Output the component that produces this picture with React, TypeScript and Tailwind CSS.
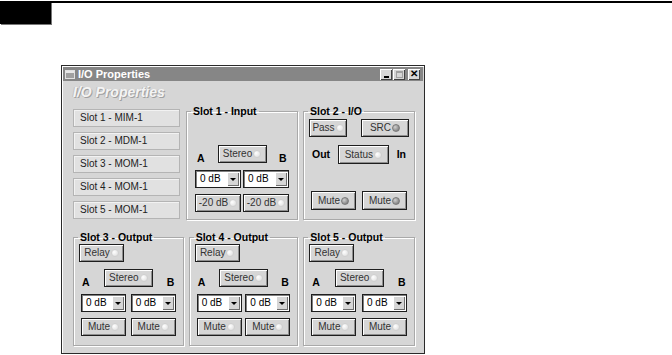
import React from 'react';

type Led = 'off' | 'dark';

const font = { fontFamily: '"Liberation Sans", Arial, sans-serif' };

function Light({ led }: { led: Led }) {
  return (
    <span
      className={
        led === 'dark'
          ? 'inline-block h-[8px] w-[8px] rounded-full border border-[#7a7a7a] bg-[radial-gradient(circle_at_35%_35%,#d0d0d0,#6a6a6a)]'
          : 'inline-block h-[8px] w-[8px] rounded-full border border-[#d0d0d0] bg-[radial-gradient(circle_at_35%_35%,#ffffff,#dadada)]'
      }
    />
  );
}

function Btn({ label, w, led = 'off', h = 'h-[18px]' }: { label: string; w: string; led?: Led; h?: string }) {
  return (
    <div
      className={`flex ${h} ${w} items-center justify-center gap-[1px] border border-[#1e1e1e] bg-[#d6d6d6] text-[10px] leading-none text-[#333] shadow-[inset_1px_1px_0_#ffffff,inset_-1px_-1px_0_#8e8e8e]`}
    >
      <span>{label}</span>
      <Light led={led} />
    </div>
  );
}

function Drop({ w }: { w: string }) {
  return (
    <div className={`flex h-[18px] ${w} items-center border border-[#1e1e1e] bg-white p-[1px] shadow-[inset_1px_1px_0_#808080]`}>
      <span className="flex-1 pl-[3px] text-[10px] leading-none text-black">0 dB</span>
      <div className="flex h-full w-[12px] items-center justify-center bg-[#d6d6d6] shadow-[inset_1px_1px_0_#ffffff,inset_-1px_-1px_0_#6e6e6e]">
        <span className="h-0 w-0 border-x-[3px] border-t-[3px] border-x-transparent border-t-black" />
      </div>
    </div>
  );
}

function Group({ title, w, h, children }: { title: string; w: string; h: string; children: React.ReactNode }) {
  return (
    <fieldset
      className={`${w} ${h} border border-[#a9a9a9] shadow-[inset_1px_1px_0_#ffffff,1px_1px_0_#ffffff]`}
    >
      <legend className="ml-[4px] px-[2px] text-[10.5px] font-bold leading-[12px] text-black">{title}</legend>
      {children}
    </fieldset>
  );
}

function OutputGroup({ n, w }: { n: number; w: string }) {
  return (
    <Group title={`Slot ${n} - Output`} w={w} h="h-[115px]">
      <div className="flex px-[5px] pt-[1px]">
        <Btn label="Relay" w="w-[45px]" />
      </div>
      <div className="mt-[7px] flex items-end justify-between px-[8px]">
        <span className="w-[8px] text-[10.5px] font-bold leading-[10px]">A</span>
        <Btn label="Stereo" w="w-[49px]" />
        <span className="w-[8px] text-[10.5px] font-bold leading-[10px]">B</span>
      </div>
      <div className="mt-[7px] flex justify-between px-[7px]">
        <Drop w="w-[45px]" />
        <Drop w="w-[45px]" />
      </div>
      <div className="mt-[6px] flex justify-between px-[7px]">
        <Btn label="Mute" w="w-[45px]" />
        <Btn label="Mute" w="w-[45px]" />
      </div>
    </Group>
  );
}

export default function App() {
  const slots = ['Slot 1 - MIM-1', 'Slot 2 - MDM-1', 'Slot 3 - MOM-1', 'Slot 4 - MOM-1', 'Slot 5 - MOM-1'];

  return (
    <div className="min-h-[355px] w-[672px] bg-white" style={font}>
      {/* page header strip */}
      <div className="flex h-[24px] pt-[1px]">
        <div className="h-[23px] w-[51px] bg-black shadow-[1px_1px_0_#777]" />
        <div className="h-[2px] flex-1 bg-black" />
      </div>

      {/* dialog window */}
      <div className="ml-[61px] mt-[41px] flex h-[289px] w-[364px] flex-col border border-[#2a2a2a] bg-[#d6d6d6] p-[1px] shadow-[inset_1px_1px_0_#ffffff]">
        {/* title bar */}
        <div className="flex h-[14px] items-center bg-[#868686] pl-[2px] pr-[3px]">
          <div className="flex h-[9px] w-[10px] flex-col border border-[#e0e0e0] bg-[#a0a0a0]">
            <div className="h-[2px] bg-[#e8e8e8]" />
          </div>
          <span className="ml-[3px] text-[11px] font-bold leading-none text-white">I/O Properties</span>
          <div className="ml-auto flex gap-[1px]">
            <div className="flex h-[11px] w-[12px] items-end justify-center bg-[#d6d6d6] pb-[2px] shadow-[inset_1px_1px_0_#ffffff,inset_-1px_-1px_0_#404040]">
              <div className="h-[2px] w-[5px] bg-black" />
            </div>
            <div className="flex h-[11px] w-[12px] items-center justify-center bg-[#d6d6d6] shadow-[inset_1px_1px_0_#ffffff,inset_-1px_-1px_0_#404040]">
              <div className="h-[7px] w-[7px] border border-[#a0a0a0] border-t-2" />
            </div>
            <div className="ml-[2px] flex h-[11px] w-[12px] items-center justify-center bg-[#d6d6d6] text-[10px] font-bold leading-none text-black shadow-[inset_1px_1px_0_#ffffff,inset_-1px_-1px_0_#404040]">
              ✕
            </div>
          </div>
        </div>

        {/* body */}
        <div className="flex flex-1 flex-col pl-[10px] pr-[8px]">
          <div className="mt-[4px] text-[14px] font-bold italic leading-[14px] text-[#f4f4f4] [text-shadow:1px_1px_0_#a0a0a0,-1px_0_0_#c0c0c0]">
            I/O Properties
          </div>

          <div className="mt-[6px] flex">
            <div className="flex w-[107px] flex-col gap-[5px] pt-[4px]">
              {slots.map((s) => (
                <div
                  key={s}
                  className="flex h-[18px] items-center border border-[#b4b4b4] bg-[#e1e1e1] pl-[6px] text-[10px] leading-none text-[#222] shadow-[inset_1px_1px_0_#f2f2f2]"
                >
                  {s}
                </div>
              ))}
            </div>

            <div className="ml-[6px]">
              <Group title="Slot 1 - Input" w="w-[112px]" h="h-[115px]">
                <div className="mt-[28px] flex items-end justify-between px-[10px]">
                  <span className="w-[8px] text-[10.5px] font-bold leading-[10px]">A</span>
                  <Btn label="Stereo" w="w-[49px]" />
                  <span className="w-[8px] text-[10.5px] font-bold leading-[10px]">B</span>
                </div>
                <div className="mt-[7px] flex justify-between px-[8px]">
                  <Drop w="w-[46px]" />
                  <Drop w="w-[46px]" />
                </div>
                <div className="mt-[6px] flex justify-between px-[8px]">
                  <Btn label="-20 dB" w="w-[46px]" />
                  <Btn label="-20 dB" w="w-[46px]" />
                </div>
              </Group>
            </div>

            <div className="ml-[5px]">
              <Group title="Slot 2 - I/O" w="w-[112px]" h="h-[115px]">
                <div className="mt-[2px] flex justify-between px-[5px]">
                  <Btn label="Pass" w="w-[38px]" />
                  <Btn label="SRC" w="w-[48px]" led="dark" />
                </div>
                <div className="mt-[8px] flex items-center justify-between px-[8px]">
                  <span className="text-[10.5px] font-bold leading-none">Out</span>
                  <Btn label="Status" w="w-[51px]" h="h-[19px]" />
                  <span className="text-[10.5px] font-bold leading-none">In</span>
                </div>
                <div className="mt-[27px] flex justify-between px-[7px]">
                  <Btn label="Mute" w="w-[45px]" h="h-[19px]" led="dark" />
                  <Btn label="Mute" w="w-[45px]" h="h-[19px]" led="dark" />
                </div>
              </Group>
            </div>
          </div>

          <div className="mt-[11px] flex gap-[5px]">
            <OutputGroup n={3} w="w-[111px]" />
            <OutputGroup n={4} w="w-[110px]" />
            <OutputGroup n={5} w="w-[112px]" />
          </div>
        </div>
      </div>
    </div>
  );
}
